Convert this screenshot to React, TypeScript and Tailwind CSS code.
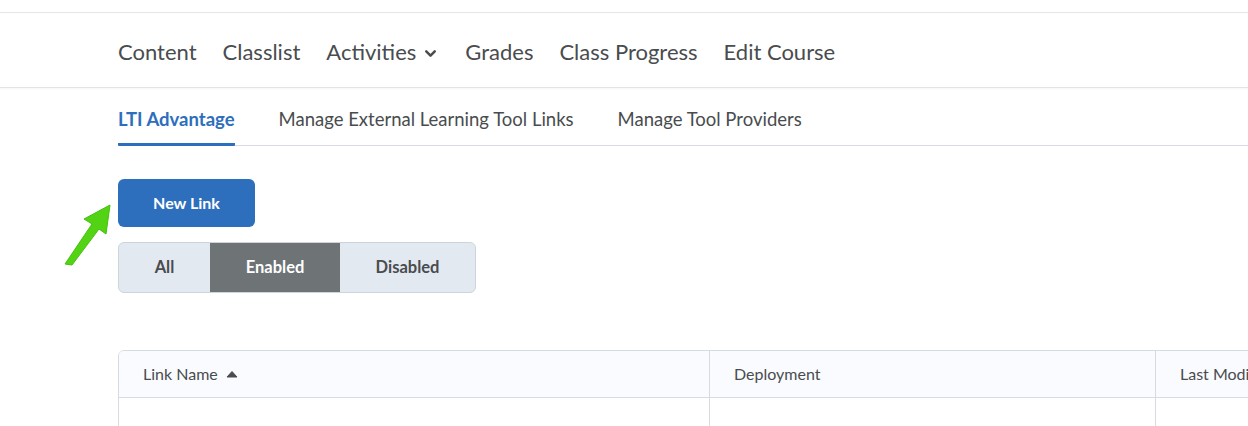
import { ChevronDown } from "lucide-react";

const navItems = ["Content", "Classlist", "Activities", "Grades", "Class Progress", "Edit Course"];
const tabs = ["LTI Advantage", "Manage External Learning Tool Links", "Manage Tool Providers"];
const filters = ["All", "Enabled", "Disabled"];

export default function App() {
  return (
    <div className="w-[1248px] h-[426px] overflow-hidden bg-white font-['Lato','Liberation_Sans',sans-serif] text-[#494c4e]">
      {/* top strip */}
      <div className="h-[13px] border-b border-[#e6e6e6]" />

      {/* course nav */}
      <nav className="h-[75px] pt-[4px] flex items-center gap-[26px] pl-[118px] border-b border-[#e3e3e3] shadow-[0_1px_2px_rgba(0,0,0,0.04)]">
        {navItems.map((item) => (
          <span key={item} className="flex items-center gap-[6px] text-[22px] leading-none">
            {item}
            {item === "Activities" && <ChevronDown className="w-[17px] h-[17px] mt-[2px]" strokeWidth={3.5} />}
          </span>
        ))}
      </nav>

      {/* sub tabs */}
      <div className="ml-[118px] mt-[12px] flex gap-[44px] border-b border-[#d9dde3]">
        {tabs.map((tab, i) => (
          <div
            key={tab}
            className={
              i === 0
                ? "pt-[6px] pb-[10px] text-[18.5px] leading-[26px] font-bold text-[#2d6ebd] border-b-[3px] border-[#2d6ebd] rounded-[1px] mb-[-1px]"
                : "pt-[6px] pb-[13px] text-[18.5px] leading-[26px]"
            }
          >
            {tab}
          </div>
        ))}
      </div>

      {/* actions */}
      <div className="relative pl-[118px] pt-[33px]">
        <svg className="absolute left-[62px] top-[56px]" width="52" height="64" viewBox="0 0 52 64">
          <polygon
            points="3,62 30,22 22,17 48,3 44,32 37,27 10,63"
            fill="#52d414"
            stroke="#45c00c"
            strokeWidth="1"
            strokeLinejoin="round"
          />
        </svg>
        <button className="w-[137px] h-[48px] rounded-[6px] bg-[#2d6ebd] text-white text-[16px] font-bold">
          New Link
        </button>
        <div className="mt-[15px] flex w-[358px] h-[51px] rounded-[6px] border border-[#cdd5dc] bg-[#e3e9f1] overflow-hidden">
          {filters.map((f) => (
            <div
              key={f}
              className={
                f === "Enabled"
                  ? "w-[130px] flex items-center justify-center bg-[#6e7376] text-white text-[16.5px] font-bold"
                  : f === "All"
                  ? "w-[91px] flex items-center justify-center text-[16.5px] font-bold"
                  : "flex-1 flex items-center justify-center text-[16.5px] font-bold"
              }
            >
              {f}
            </div>
          ))}
        </div>
      </div>

      {/* table */}
      <div className="ml-[118px] mt-[57px] w-[1300px] border border-[#d6dbe2] rounded-tl-[6px] overflow-hidden">
        <div className="flex h-[47px] bg-[#f9fbff] border-b border-[#d6dbe2] text-[16px]">
          <div className="w-[591px] flex items-center gap-[8px] pl-[24px] border-r border-[#d6dbe2]">
            Link Name
            <svg width="12" height="8" viewBox="0 0 12 8">
              <path d="M1 7 L6 1.5 L11 7 Z" fill="#494c4e" stroke="#494c4e" strokeLinejoin="round" />
            </svg>
          </div>
          <div className="w-[446px] flex items-center pl-[24px] border-r border-[#d6dbe2]">Deployment</div>
          <div className="flex-1 flex items-center pl-[24px]">Last Modified</div>
        </div>
        <div className="flex h-[60px]">
          <div className="w-[591px] border-r border-[#d6dbe2]" />
          <div className="w-[446px] border-r border-[#d6dbe2]" />
          <div className="flex-1" />
        </div>
      </div>
    </div>
  );
}
